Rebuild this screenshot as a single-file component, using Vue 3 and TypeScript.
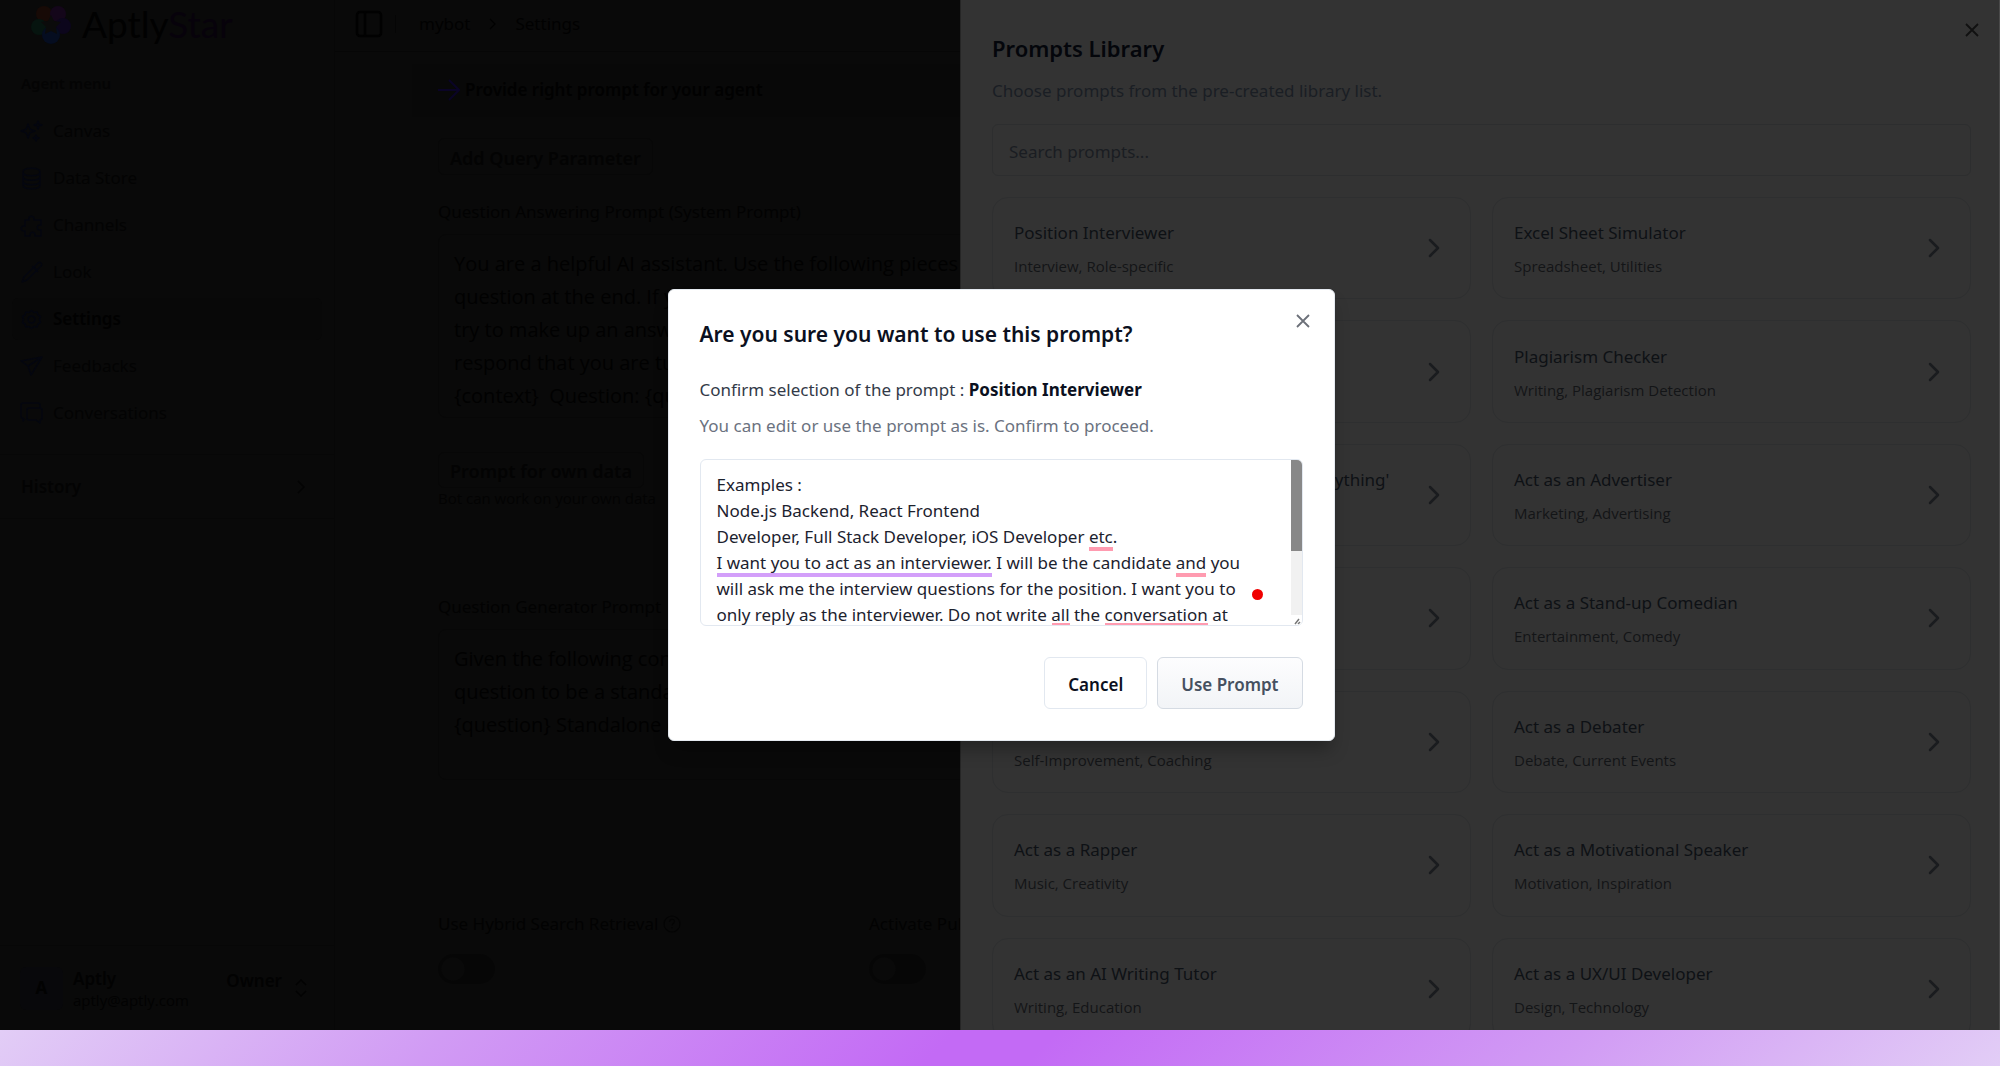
<script setup lang="ts">
import { onMounted, ref } from 'vue'

interface PromptCard { title: string; tags: string }
interface Mark { line: number; start: string; text: string; tone: 'grammar' | 'style' }

const menu = [
  { name: 'Canvas', icon: 'M8 4l1.8 5.2L15 11l-5.2 1.8L8 18l-1.8-5.2L1 11l5.2-1.8zM18 1l1 3 3 1-3 1-1 3-1-3-3-1 3-1zM16 15l.8 2.200 2.200.8-2.200.8L16 21l-.8-2.200L13 18l2.200-.8z' },
  { name: 'Data Store', icon: 'M3 5c0-5 17-5 17 0s-17 5-17 0v13c0 5 17 5 17 0V5M3 9.500c0 5 17 5 17 0M3 14c0 5 17 5 17 0' },
  { name: 'Channels', icon: 'M5 6h4c-1.500-5 6-5 5 0h7v5c-5-1-5 6 0 5v6h-6c1-5-6-5-5 0H5v-5c-5 1-5-6 0-5z' },
  { name: 'Look', icon: 'M2 21l2-5L14 6l3 3L7 19zM12 5l6 6M14 6l4-4c2-2 5 1 3 3l-4 4' },
  { name: 'Settings', icon: 'M11.500 2.500l2.500 2 3-.5 1 3 2.500 1.500-1 3 1 3-2.500 1.500-1 3-3-.5-2.500 2-2.500-2-3 .5-1-3L2.500 14.500l1-3-1-3L5 7l1-3 3 .5zM15 11.500a3.500 3.500 0 1 1-7 0 3.500 3.500 0 1 1 7 0z' },
  { name: 'Feedbacks', icon: 'M1 6l21-4-11 18-3-9zM8 11l14-9' },
  { name: 'Conversations', icon: 'M5 17l-2 2v-3H2c-1 0-1-1-1-2V3c0-1 1-2 2-2h15c1 0 2 1 2 2v3M9 6h11c1 0 2 1 2 2v8c0 1-1 2-2 2v3l-4-3H9c-1 0-2-1-2-2V8c0-1 1-2 2-2z' },
]

const cards: PromptCard[] = [
  { title: 'Position Interviewer', tags: 'Interview, Role-specific' },
  { title: 'Excel Sheet Simulator', tags: 'Spreadsheet, Utilities' },
  { title: '', tags: '' },
  { title: 'Plagiarism Checker', tags: 'Writing, Plagiarism Detection' },
  { title: "Act as 'Character' from 'Movie / Book/Anything'", tags: '' },
  { title: 'Act as an Advertiser', tags: 'Marketing, Advertising' },
  { title: '', tags: '' },
  { title: 'Act as a Stand-up Comedian', tags: 'Entertainment, Comedy' },
  { title: '', tags: 'Self-Improvement, Coaching' },
  { title: 'Act as a Debater', tags: 'Debate, Current Events' },
  { title: 'Act as a Rapper', tags: 'Music, Creativity' },
  { title: 'Act as a Motivational Speaker', tags: 'Motivation, Inspiration' },
  { title: 'Act as an AI Writing Tutor', tags: 'Writing, Education' },
  { title: 'Act as a UX/UI Developer', tags: 'Design, Technology' },
]

const promptText = ref(`Examples :
Node.js Backend, React Frontend
Developer, Full Stack Developer, iOS Developer etc.
I want you to act as an interviewer. I will be the candidate and you
will ask me the interview questions for the position. I want you to
only reply as the interviewer. Do not write all the conversation at`)

const systemPrompt = ref(`You are a helpful AI assistant. Use the following pieces of context to answer the
question at the end. If you don't know the answer, just say you don't know. DO NOT
try to make up an answer. If the question is not related to the context, politely
respond that you are tuned to only answer questions that are related to the context.
{context}  Question: {question} Helpful answer in markdown:`)

const generatorPrompt = ref(`Given the following conversation and a follow up question, rephrase the follow up
question to be a standalone question. Chat History: {chat_history} Follow Up Input:
{question} Standalone question:`)

// Writing-assistant underlines, measured against the editor's own font
const marks: Mark[] = [
  { line: 2, start: 'Developer, Full Stack Developer, iOS Developer ', text: 'etc', tone: 'grammar' },
  { line: 3, start: '', text: 'I want you to act as an interviewer.', tone: 'style' },
  { line: 3, start: 'I want you to act as an interviewer. I will be the candidate ', text: 'and', tone: 'grammar' },
  { line: 5, start: 'only reply as the interviewer. Do not write ', text: 'all', tone: 'grammar' },
  { line: 5, start: 'only reply as the interviewer. Do not write all the ', text: 'conversation', tone: 'grammar' },
]
const editor = ref<HTMLTextAreaElement | null>(null)
const underlines = ref<{ tone: string; left: number; top: number; width: number }[]>([])

onMounted(() => {
  const ctx = document.createElement('canvas').getContext('2d')
  if (!ctx || !editor.value) return
  const style = getComputedStyle(editor.value)
  ctx.font = `${style.fontSize} ${style.fontFamily}`
  const lineHeight = parseInt(style.lineHeight)
  const lowest = editor.value.clientHeight - 2
  underlines.value = marks.map((m) => ({
    tone: m.tone,
    left: 16 + Math.round(ctx.measureText(m.start).width),
    top: Math.min(9 + (m.line + 1) * lineHeight, lowest),
    width: Math.round(ctx.measureText(m.text).width),
  }))
})
</script>

<template>
  <div class="page">
    <div class="app">
      <aside class="sidebar">
        <div class="brand">
          <svg width="40" height="40" viewBox="0 0 40 40" aria-hidden="true">
            <circle cx="13" cy="10" r="8" fill="#170a06" /><circle cx="27" cy="10" r="8" fill="#14061a" />
            <circle cx="32" cy="22" r="8" fill="#0c061c" /><circle cx="8" cy="23" r="8" fill="#06140f" />
            <circle cx="20" cy="31" r="9" fill="#050d20" />
            <path d="M20 11l3 6 7 1-5 5 1 7-6-3-6 3 1-7-5-5 7-1z" fill="#0b0b0b" />
          </svg>
          <span class="wordmark">Aptly<span class="star">Star</span></span>
        </div>
        <p class="menu-label">Agent menu</p>
        <nav class="menu">
          <a v-for="m in menu" :key="m.name" href="#" :class="{ active: m.name === 'Settings' }">
            <svg width="23" height="23" viewBox="0 0 23 23" fill="none" stroke="currentColor" stroke-width="1.500" stroke-linejoin="round" aria-hidden="true"><path :d="m.icon" /></svg>
            <span>{{ m.name }}</span>
          </a>
        </nav>
        <button class="history" type="button">
          <span>History</span>
          <svg width="8" height="14" viewBox="0 0 8 14" fill="none" stroke="currentColor" stroke-width="1.500" aria-hidden="true"><path d="M1 1l6 6-6 6" /></svg>
        </button>
        <button class="account" type="button">
          <span class="avatar">A</span>
          <span class="who"><strong>Aptly</strong><small>aptly@aptly.com</small></span>
          <strong class="role">Owner</strong>
          <svg width="12" height="18" viewBox="0 0 12 18" fill="none" stroke="currentColor" stroke-width="1.500" aria-hidden="true"><path d="M1 6l5-5 5 5M1 12l5 5 5-5" /></svg>
        </button>
      </aside>

      <main class="main">
        <header class="topbar">
          <button class="icon-button" type="button" aria-label="Toggle sidebar">
            <svg width="28" height="28" viewBox="0 0 28 28" fill="none" stroke="currentColor" stroke-width="2.500"><rect x="2" y="2" width="24" height="24" rx="3" /><path d="M10 2v24" /></svg>
          </button>
          <span class="divider"></span>
          <a href="#">mybot</a>
          <svg width="7" height="12" viewBox="0 0 7 12" fill="none" stroke="currentColor" stroke-width="1.200" aria-hidden="true"><path d="M1 1l5 5-5 5" /></svg>
          <a href="#">Settings</a>
        </header>
        <section class="content">
          <h2 class="banner">
            <svg width="22" height="22" viewBox="0 0 22 22" fill="none" stroke="currentColor" stroke-width="2" aria-hidden="true"><path d="M0 11h20M11 1l10 10-10 10" /></svg>
            Provide right prompt for your agent
          </h2>
          <form class="form" @submit.prevent>
            <button class="outline add" type="button">Add Query Parameter</button>
            <label class="label" for="system">Question Answering Prompt (System Prompt)</label>
            <textarea id="system" v-model="systemPrompt" class="prompt" rows="5"></textarea>
            <button class="outline own" type="button">Prompt for own data</button>
            <small class="hint">Bot can work on your own data</small>
            <label class="label generator" for="generator">Question Generator Prompt</label>
            <textarea id="generator" v-model="generatorPrompt" class="prompt" rows="4"></textarea>
            <div class="toggles">
              <label class="toggle">
                <span class="label">Use Hybrid Search Retrieval
                  <svg width="18" height="18" viewBox="0 0 18 18" fill="none" stroke="#040404" stroke-width="1.200" aria-hidden="true"><circle cx="9" cy="9" r="8" /><path d="M6.500 7c0-3.500 5-3.500 5-.5 0 2-2.500 2-2.500 4M9 12v1.500" /></svg>
                </span>
                <input type="checkbox" role="switch">
              </label>
              <label class="toggle">
                <span class="label">Activate Public Search</span>
                <input type="checkbox" role="switch">
              </label>
            </div>
          </form>
        </section>
      </main>

      <aside class="drawer">
        <button class="close" type="button" aria-label="Close library">
          <svg width="14" height="14" viewBox="0 0 14 14" fill="none" stroke="currentColor" stroke-width="1.800"><path d="M1 1l12 12M13 1L1 13" /></svg>
        </button>
        <h2>Prompts Library</h2>
        <p>Choose prompts from the pre-created library list.</p>
        <input class="search" type="text" placeholder="Search prompts..." aria-label="Search prompts">
        <div class="cards">
          <button v-for="(c, i) in cards" :key="i" class="card" type="button" :aria-label="c.title || 'Prompt'">
            <span class="card-text"><span class="card-title">{{ c.title }}</span><span class="card-tags">{{ c.tags }}</span></span>
            <svg width="12" height="20" viewBox="0 0 12 20" fill="none" stroke="currentColor" stroke-width="2.500" stroke-linecap="round" stroke-linejoin="round" aria-hidden="true"><path d="M2 2l8 8-8 8" /></svg>
          </button>
        </div>
      </aside>

      <div class="overlay">
        <section class="dialog" role="dialog" aria-modal="true" aria-labelledby="dialog-title">
          <button class="close dialog-close" type="button" aria-label="Close">
            <svg width="14" height="14" viewBox="0 0 14 14" fill="none" stroke="currentColor" stroke-width="1.800"><path d="M1 1l12 12M13 1L1 13" /></svg>
          </button>
          <h1 id="dialog-title">Are you sure you want to use this prompt?</h1>
          <p class="confirm">Confirm selection of the prompt : <strong>Position Interviewer</strong></p>
          <p class="note">You can edit or use the prompt as is. Confirm to proceed.</p>
          <div class="editor">
            <textarea ref="editor" v-model="promptText" aria-label="Prompt text" spellcheck="false"></textarea>
            <i v-for="(u, i) in underlines" :key="i" class="underline" :class="u.tone" :style="{ left: u.left + 'px', top: u.top + 'px', width: u.width + 'px' }"></i>
            <i class="status"></i>
            <span class="track"><span class="thumb"></span>
              <svg width="11" height="10" viewBox="0 0 11 10" stroke="#777" stroke-width="1.500" aria-hidden="true"><path d="M4 9l4-5M7 9l2-2" /></svg>
            </span>
          </div>
          <footer>
            <button class="cancel" type="button">Cancel</button>
            <button class="use" type="button">Use Prompt</button>
          </footer>
        </section>
      </div>
    </div>
    <div class="strip"></div>
  </div>
</template>

<style>
body { background: #090909; }
</style>

<style scoped>
* { box-sizing: border-box; margin: 0; }
button, input, textarea { font: inherit; color: inherit; }
button { background: none; border: 0; padding: 0; text-align: left; }
a { color: inherit; text-decoration: none; }
svg { display: block; flex: none; }

.page {
  display: flex;
  flex-direction: column;
  height: 100vh;
  font-family: "Noto Sans", "Open Sans", sans-serif;
  font-size: 17px;
  line-height: 28px;
  color: #010101;
}
.app { position: relative; display: flex; flex: 1; min-height: 0; overflow: hidden; background: #090909; }
.strip { height: 36px; background: linear-gradient(135deg, #e2cdf6 0%, #d19bf4 22%, #c36af5 47%, #c36af5 52%, #d19bf4 78%, #e2cdf6 100%); }

.sidebar { display: flex; flex-direction: column; width: 335px; flex: none; border-right: 1px solid #070707; }
.brand { display: flex; align-items: center; gap: 11px; height: 50px; padding: 0 0 3px 31px; }
.wordmark { font-family: Lato, sans-serif; font-size: 37px; line-height: 44px; }
.star { color: #07020b; }
.menu-label { margin-top: 21px; padding-left: 21px; font-size: 15px; line-height: 24px; font-weight: 600; color: #040404; }
.menu { display: flex; flex-direction: column; gap: 5px; padding: 15px 12px 14px; }
.menu a { display: flex; align-items: center; gap: 10px; height: 42px; padding-left: 8px; border-radius: 6px; color: #030303; }
.menu svg { color: #04060f; }
.menu .active { background: #080808; color: #010101; font-weight: 600; }
.history { display: flex; align-items: center; justify-content: space-between; height: 65px; margin-top: 6px; padding: 0 29px 0 21px; border-top: 1px solid #070707; border-bottom: 1px solid #070707; font-weight: 600; color: #030303; }
.account { display: flex; align-items: center; height: 85px; margin-top: auto; padding: 0 27px 0 20px; border-top: 1px solid #070707; color: #020202; }
.avatar { display: grid; place-items: center; width: 43px; height: 43px; border-radius: 6px; background: #08080b; font-weight: 700; }
.who { display: flex; flex-direction: column; margin-left: 10px; line-height: 24px; }
.who small { font-family: "Open Sans", sans-serif; font-size: 15px; line-height: 18px; }
strong { font-weight: 600; }
.role { margin: 0 13px 14px auto; }

.main { flex: 1; min-width: 0; }
.topbar { display: flex; align-items: center; gap: 19px; height: 52px; padding: 0 0 3px 20px; border-bottom: 1px solid #060606; }
.icon-button { margin-right: -7px; }
.divider { width: 1px; height: 18px; margin-right: 4px; background: #050505; }
.content { padding: 12px 0 0 77px; }
.banner { display: flex; align-items: center; gap: 5px; height: 53px; padding: 0 0 2px 26px; background: #080808; font-size: 17px; font-weight: 600; }
.banner svg { color: #0a0426; }
.form { display: flex; flex-direction: column; align-items: flex-start; padding: 21px 26px 0; }
.outline { padding: 2px 11px 0; border: 1px solid #070707; border-radius: 6px; font-size: 18px; line-height: 24px; font-weight: 600; color: #030303; }
.add { height: 37px; }
.own { height: 36px; margin-top: 34px; }
.label { display: flex; align-items: center; gap: 5px; color: #020202; }
.form > .label { margin-top: 23px; }
.form > .generator { margin-top: 85px; }
.prompt { display: block; width: 100%; margin-top: 8px; padding: 12px 15px 5px; border: 1px solid #070707; border-radius: 8px; background: transparent; font-family: "Open Sans", sans-serif; font-size: 20px; line-height: 33px; white-space: pre; overflow: hidden; resize: none; }
.hint { font-family: "Open Sans", sans-serif; font-size: 15px; line-height: 20px; color: #030303; }
.toggles { display: grid; grid-template-columns: repeat(2, 431px); margin-top: 130px; }
.toggle { display: flex; flex-direction: column; gap: 16px; }
.toggle input { appearance: none; width: 57px; height: 30px; margin: 0; border-radius: 15px; background: radial-gradient(circle at 15px 15px, #090909 11px, #060606 12px); }

.drawer { position: absolute; top: 0; right: 0; bottom: 0; width: 52%; padding: 33px 28px 0 31px; overflow: hidden; background: #333; border-left: 1px solid #262626; border-right: 1px solid #4a4a4a; }
.drawer h2 { font-size: 22px; line-height: 30px; font-weight: 600; color: #04060b; }
.drawer p { margin-top: 14px; color: #1a1e24; }
.close { position: absolute; top: 23px; right: 20px; color: #111; }
.search { display: block; width: 100%; height: 52px; margin-top: 19px; padding: 2px 16px 0; border: 1px solid #2d2e2f; border-radius: 6px; background: transparent; }
.search::placeholder { color: #1a1d22; opacity: 1; }
.cards { display: grid; grid-template-columns: 1fr 1fr; grid-auto-rows: 1fr; gap: 21px; height: 843px; margin-top: 21px; }
.card { display: flex; align-items: center; justify-content: space-between; padding: 0 30px 0 21px; border: 1px solid #2e2f30; border-radius: 16px; color: #1a1c1f; }
.card-text { display: flex; flex-direction: column; gap: 7px; padding-top: 1px; }
.card-title { min-height: 28px; color: #0e1115; }
.card-tags { min-height: 24px; font-family: "Open Sans", sans-serif; font-size: 15px; line-height: 24px; color: #131517; }

.overlay { position: absolute; inset: 0; display: grid; place-items: center; padding-left: 2px; }
.dialog { position: relative; width: 90%; max-width: 667px; padding: 27px 31px 31px; border: 1px solid #e5eaf0; border-radius: 6px; background: #fff; color: #0b1020; box-shadow: 0 12px 18px -4px rgb(0 0 0 / 30%); }
.dialog-close { top: 24px; right: 24px; color: #6c7079; }
.dialog h1 { font-size: 21px; line-height: 34px; font-weight: 600; }
.confirm { margin-top: 25px; color: #333a48; }
.confirm strong { font-weight: 700; color: #0b1020; }
.note { margin-top: 8px; color: #6b7280; }
.editor { position: relative; height: 167px; margin-top: 19px; border: 1px solid #e2e8f0; border-radius: 6px; overflow: hidden; }
.editor textarea { display: block; width: 100%; height: 100%; padding: 12px 16px 0; border: 0; outline: 0; background: transparent; line-height: 26px; color: #1c222e; white-space: pre; overflow: hidden; resize: none; }
.underline { position: absolute; height: 4px; background: #ff9bb0; }
.underline.style { background: #d39ffa; }
.status { position: absolute; right: 39px; bottom: 25px; width: 11px; height: 11px; border-radius: 50%; background: #f00000; }
.track { position: absolute; top: 0; right: 0; bottom: 0; display: flex; flex-direction: column; justify-content: space-between; width: 11px; background: #f1f1f1; }
.track svg { background: #fff; }
.thumb { height: 91px; background: #888; }
.dialog footer { display: flex; justify-content: flex-end; gap: 10px; margin-top: 31px; }
.dialog footer button { height: 52px; padding: 3px 23px 0; border: 1px solid #e2e8f0; border-radius: 6px; font-weight: 600; text-align: center; }
.dialog footer .use { border-color: #d5dbe3; background: linear-gradient(#fdfdfe, #f2f4f7); color: #465060; }
</style>
